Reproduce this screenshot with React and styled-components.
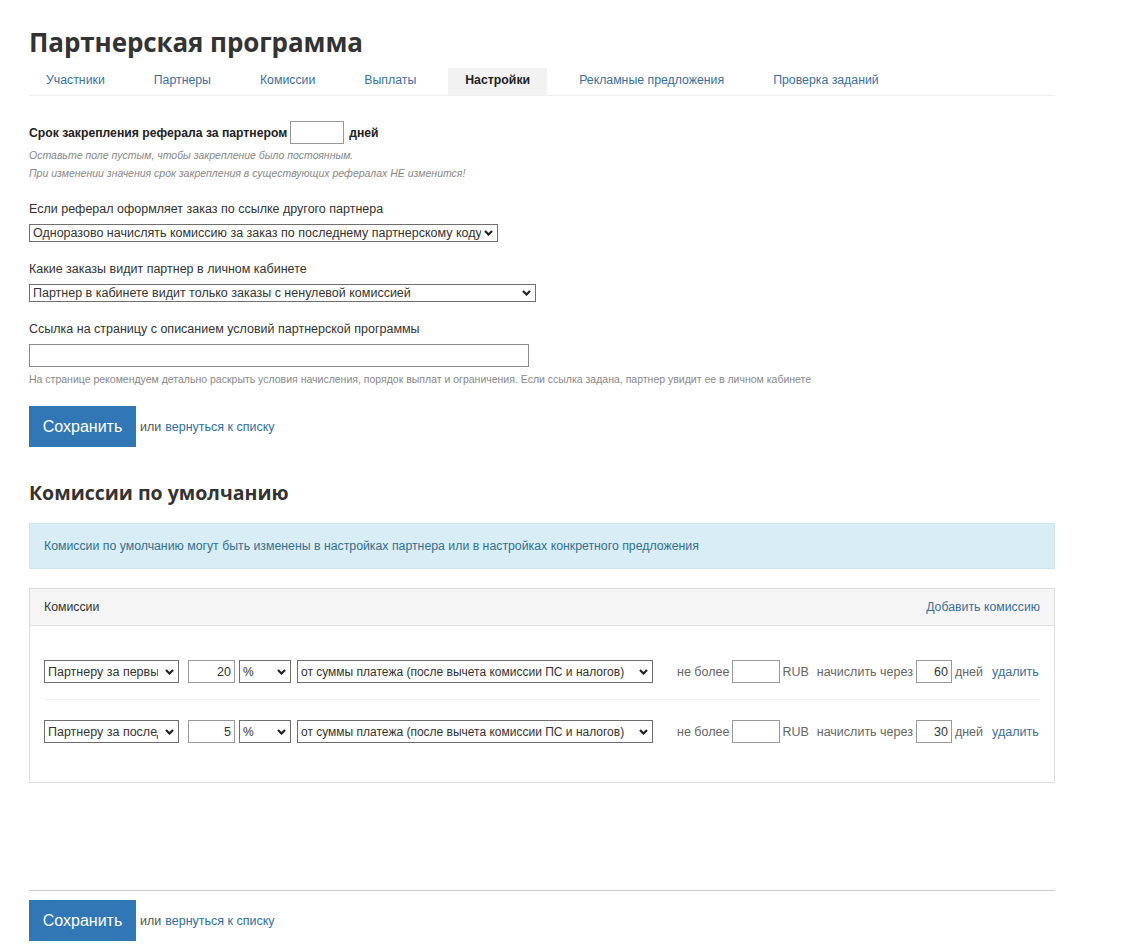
import React from "react";
import styled, { createGlobalStyle } from "styled-components";

const GlobalStyle = createGlobalStyle`
  html, body { margin: 0; padding: 0; background: #fff; }
  body {
    font-family: "Liberation Sans", Arial, sans-serif;
    font-size: 12.5px;
    color: #333;
  }
  * { box-sizing: border-box; }
`;

const Page = styled.div`
  width: 1055px;
  padding: 26px 0 4px 29px;
`;

const Title = styled.h1`
  margin: 0;
  font-family: "Open Sans", "Liberation Sans", sans-serif;
  font-size: 26px;
  font-weight: 700;
  line-height: 32px;
  color: #333;
  letter-spacing: -0.1px;
`;

const Tabs = styled.ul`
  display: flex;
  gap: 15px;
  margin: 10px 0 0;
  padding: 0;
  list-style: none;
  border-bottom: 1px solid #eee;
`;

const Tab = styled.li`
  height: 27px;
  line-height: 24px;
  padding: 0 17px 3px;
  font-size: 12.3px;
  background: ${(p) => (p.$active ? "#f2f2f2" : "transparent")};
  color: ${(p) => (p.$active ? "#222" : "#3a6fa0")};
  font-weight: ${(p) => (p.$active ? 700 : 400)};
  cursor: pointer;
`;

const InlineRow = styled.div`
  display: flex;
  align-items: center;
  margin-top: 25px;
  font-weight: 700;
  font-size: 12.2px;
  color: #222;
`;

const SmallInput = styled.input`
  width: ${(p) => p.$w}px;
  height: ${(p) => p.$h || 23}px;
  margin: 0 ${(p) => p.$mr ?? 0}px 0 ${(p) => p.$ml ?? 0}px;
  border: 1px solid #999;
  border-radius: 0;
  padding: 0 3px;
  font-family: inherit;
  font-size: 12.5px;
  color: #333;
  text-align: ${(p) => (p.$right ? "right" : "left")};
  background: #fff;
  outline: none;
  flex: none;
`;

const Hints = styled.div`
  margin-top: 2px;
`;

const Hint = styled.div`
  font-size: 10.5px;
  line-height: 18px;
  margin-top: ${(p) => p.$mt ?? 0}px;
  color: #888;
  font-style: ${(p) => (p.$italic ? "italic" : "normal")};
`;

const Field = styled.div`
  margin-top: 18px;
`;

const Label = styled.div`
  font-size: 12.5px;
  line-height: 18px;
  color: #333;
  margin-bottom: 6px;
`;

const SelectWrap = styled.div`
  position: relative;
  display: inline-block;
  width: ${(p) => p.$w}px;
  height: ${(p) => p.$h}px;
  margin-left: ${(p) => p.$ml ?? 0}px;
  flex: none;
`;

const Select = styled.select`
  appearance: none;
  -webkit-appearance: none;
  display: block;
  width: 100%;
  height: 100%;
  border: 1px solid #6f6f6f;
  border-radius: 0;
  background: #fff;
  padding: 0 ${(p) => p.$pr || 16}px 0 3px;
  font-family: inherit;
  font-size: ${(p) => p.$fs || 12.5}px;
  color: #333;
  outline: none;
`;

const Chevron = styled.svg`
  position: absolute;
  right: 5px;
  top: 50%;
  width: 9px;
  height: 6px;
  margin-top: -3px;
  pointer-events: none;
`;

function DropDown({ w, h, ml, fs, pr, value, options }) {
  return (
    <SelectWrap $w={w} $h={h} $ml={ml}>
      <Select defaultValue={value} $fs={fs} $pr={pr}>
        {options.map((o) => (
          <option key={o}>{o}</option>
        ))}
      </Select>
      <Chevron viewBox="0 0 9 6">
        <polyline points="1,1 4.5,4.5 8,1" fill="none" stroke="#222" strokeWidth="2.2" />
      </Chevron>
    </SelectWrap>
  );
}

const WideInput = styled.input`
  display: block;
  width: 500px;
  height: 23px;
  border: 1px solid #888;
  border-radius: 0;
  padding: 0 4px;
  font-family: inherit;
  font-size: 12.5px;
  outline: none;
`;

const Actions = styled.div`
  display: flex;
  align-items: center;
  margin-top: ${(p) => p.$mt ?? 0}px;
  font-size: 12.5px;
  color: #555;
`;

const SaveButton = styled.button`
  width: 107px;
  height: 41px;
  border: none;
  border-radius: 0;
  background: #3177b5;
  color: #fff;
  font-family: inherit;
  font-size: 16px;
  margin-right: 4px;
  cursor: pointer;
`;

const Link = styled.a`
  color: ${(p) => (p.$strong ? "#2f6ea5" : "#3a6fa0")};
  text-decoration: none;
  margin-left: ${(p) => p.$ml ?? 0}px;
  cursor: pointer;
  white-space: nowrap;
`;

const SectionTitle = styled.h2`
  margin: 34px 0 0;
  font-family: "Open Sans", "Liberation Sans", sans-serif;
  font-size: 19.5px;
  line-height: 24px;
  font-weight: 700;
  color: #333;
`;

const InfoBox = styled.div`
  margin-top: 18px;
  width: 1026px;
  padding: 14px 14px;
  line-height: 16px;
  font-size: 12.3px;
  color: #31708f;
  background: #d9edf7;
  border: 1px solid #cde6f0;
`;

const Panel = styled.div`
  margin-top: 19px;
  width: 1026px;
  border: 1px solid #ddd;
`;

const PanelHeader = styled.div`
  display: flex;
  justify-content: space-between;
  align-items: center;
  height: 37px;
  padding: 0 14px;
  background: #f5f5f5;
  border-bottom: 1px solid #e2e2e2;
  font-size: 12.3px;
  color: #333;
`;

const PanelBody = styled.div`
  padding: 14px 14px 23px;
`;

const CommissionRow = styled.div`
  display: flex;
  align-items: center;
  padding: 20px 0 16px;
  border-bottom: ${(p) => (p.$last ? "none" : "1px solid #eee")};
  font-size: 12.5px;
  color: #666;
`;

const RowText = styled.span`
  margin-left: ${(p) => p.$ml ?? 0}px;
  white-space: nowrap;
`;

const Footer = styled.div`
  margin-top: 107px;
  width: 1026px;
  border-top: 1px solid #ccc;
  padding-top: 9px;
`;

const tabs = [
  "Участники",
  "Партнеры",
  "Комиссии",
  "Выплаты",
  "Настройки",
  "Рекламные предложения",
  "Проверка заданий",
];

const ruleOptions = ["Партнеру за первый заказ", "Партнеру за последующие заказы"];
const baseOption = "от суммы платежа (после вычета комиссии ПС и налогов)";

const rows = [
  { rule: "Партнеру за первый заказ", amount: "20", days: "60" },
  { rule: "Партнеру за последующие заказы", amount: "5", days: "30" },
];

function SaveActions({ mt }) {
  return (
    <Actions $mt={mt}>
      <SaveButton>Сохранить</SaveButton>
      или<Link $strong $ml={4}>вернуться к списку</Link>
    </Actions>
  );
}

export default function App() {
  return (
    <>
      <GlobalStyle />
      <Page>
        <Title>Партнерская программа</Title>
        <Tabs>
          {tabs.map((t) => (
            <Tab key={t} $active={t === "Настройки"}>
              {t}
            </Tab>
          ))}
        </Tabs>

        <InlineRow>
          Срок закрепления реферала за партнером
          <SmallInput $w={54} $h={23} $ml={3} $mr={5} />
          дней
        </InlineRow>
        <Hints>
          <Hint $italic>Оставьте поле пустым, чтобы закрепление было постоянным.</Hint>
          <Hint $italic>При изменении значения срок закрепления в существующих рефералах НЕ изменится!</Hint>
        </Hints>

        <Field>
          <Label>Если реферал оформляет заказ по ссылке другого партнера</Label>
          <DropDown
            w={469}
            h={18}
            value="Одноразово начислять комиссию за заказ по последнему партнерскому коду"
            options={[
              "Одноразово начислять комиссию за заказ по последнему партнерскому коду",
              "Начислять комиссию первому партнеру",
            ]}
          />
        </Field>

        <Field>
          <Label>Какие заказы видит партнер в личном кабинете</Label>
          <DropDown
            w={507}
            h={18}
            value="Партнер в кабинете видит только заказы с ненулевой комиссией"
            options={[
              "Партнер в кабинете видит только заказы с ненулевой комиссией",
              "Партнер в кабинете видит все заказы",
            ]}
          />
        </Field>

        <Field>
          <Label>Ссылка на страницу с описанием условий партнерской программы</Label>
          <WideInput />
          <Hint $mt={3}>
            На странице рекомендуем детально раскрыть условия начисления, порядок выплат и ограничения. Если ссылка задана, партнер увидит ее в личном кабинете
          </Hint>
        </Field>

        <SaveActions mt={18} />

        <SectionTitle>Комиссии по умолчанию</SectionTitle>
        <InfoBox>
          Комиссии по умолчанию могут быть изменены в настройках партнера или в настройках конкретного предложения
        </InfoBox>

        <Panel>
          <PanelHeader>
            <span>Комиссии</span>
            <Link>Добавить комиссию</Link>
          </PanelHeader>
          <PanelBody>
            {rows.map((r, i) => (
              <CommissionRow key={r.rule} $last={i === rows.length - 1}>
                <DropDown w={135} h={23} fs={12.5} pr={20} value={r.rule} options={ruleOptions} />
                <SmallInput $w={47} $ml={9} defaultValue={r.amount} $right />
                <DropDown w={52} h={23} ml={4} fs={12} value="%" options={["%", "RUB"]} />
                <DropDown w={356} h={23} ml={6} fs={12} value={baseOption} options={[baseOption, "от суммы платежа"]} />
                <RowText $ml={24}>не более</RowText>
                <SmallInput $w={48} $ml={3} />
                <RowText $ml={2}>RUB</RowText>
                <RowText $ml={8}>начислить через</RowText>
                <SmallInput $w={36} $ml={3} defaultValue={r.days} $right />
                <RowText $ml={3}>дней</RowText>
                <Link $ml={9}>удалить</Link>
              </CommissionRow>
            ))}
          </PanelBody>
        </Panel>

        <Footer>
          <SaveActions mt={0} />
        </Footer>
      </Page>
    </>
  );
}
